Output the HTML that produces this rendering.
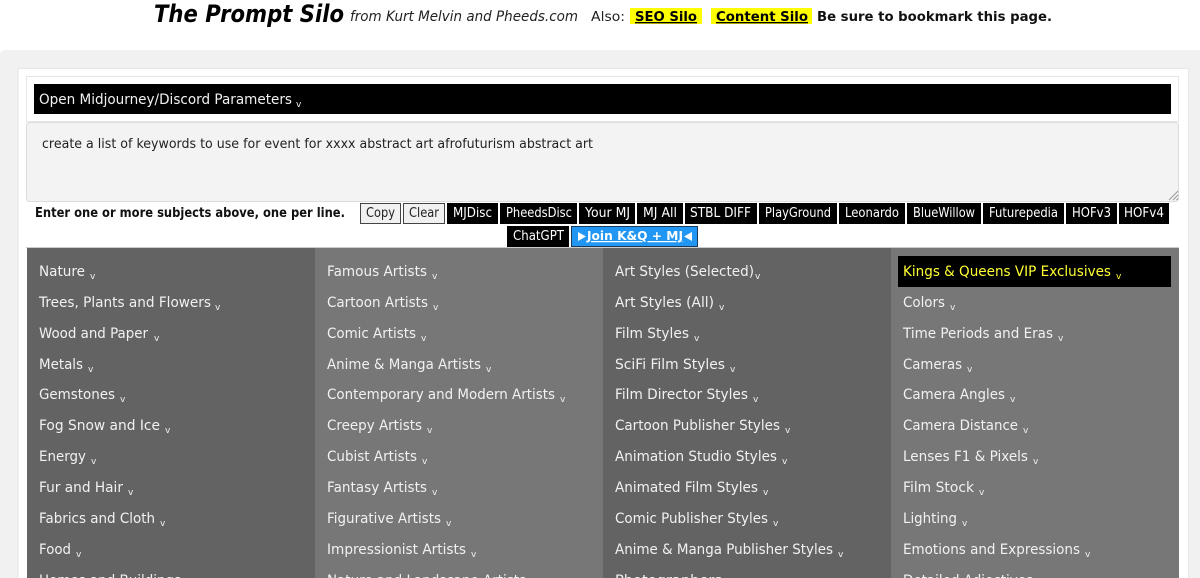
<!DOCTYPE html>
<html><head><meta charset="utf-8"><title>The Prompt Silo</title>
<style>
html,body{margin:0;padding:0;background:#fff;width:1200px;height:578px;overflow:hidden}
svg{display:block;position:absolute;left:0;top:0}
text{font-family:"DejaVu Sans",sans-serif;white-space:pre}
.r text,text.r{font-size:14.5px;fill:#f1f1f1}
.c{font-size:9px;fill:#f1f1f1}
.b{font-size:13px;fill:#fff}
</style></head><body>
<svg width="1200" height="578" viewBox="0 0 1200 578" xmlns="http://www.w3.org/2000/svg" overflow="hidden">
<rect width="1200" height="578" fill="#fff"/>
<path d="M0 578V55Q0 50 5 50H1200V578Z" fill="#f1f1f1"/>
<path d="M18 578V68.500H1188.500V578" fill="#fff" stroke="#e6e6e6"/>
<rect x="26.500" y="76.500" width="1152" height="45" fill="#fff" stroke="#e6e6e6"/>
<rect x="34" y="84" width="1137" height="30" fill="#000"/>
<text x="39" y="104" font-size="14.500" fill="#f1f1f1" textLength="253" lengthAdjust="spacingAndGlyphs">Open Midjourney/Discord Parameters</text>
<text x="296" y="107" class="c">v</text>
<rect x="26.500" y="122.500" width="1152" height="79" rx="3" fill="#f3f3f3" stroke="#dcdcdc"/>
<path d="M1169 200L1178 191M1173 200L1178 195M1176.500 200L1178 198.500" stroke="#999" stroke-width="1" fill="none"/>
<text x="42" y="148" font-size="13" fill="#222" textLength="551" lengthAdjust="spacingAndGlyphs">create a list of keywords to use for event for xxxx abstract art afrofuturism abstract art</text>

<!-- header -->
<text x="154" y="22" font-size="24" font-weight="bold" font-style="italic" fill="#000" textLength="190" lengthAdjust="spacingAndGlyphs">The Prompt Silo</text>
<text x="350" y="21" font-size="14" font-style="italic" fill="#222" textLength="228" lengthAdjust="spacingAndGlyphs">from Kurt Melvin and Pheeds.com</text>
<text x="591" y="21" font-size="13.500" fill="#222" textLength="34" lengthAdjust="spacingAndGlyphs">Also:</text>
<rect x="630" y="8" width="72" height="16" fill="#ff0"/>
<rect x="711" y="8" width="101" height="16" fill="#ff0"/>
<text x="635" y="21" font-size="13.500" font-weight="bold" fill="#000" text-decoration="underline" textLength="62" lengthAdjust="spacingAndGlyphs">SEO Silo</text>
<text x="716" y="21" font-size="13.500" font-weight="bold" fill="#000" text-decoration="underline" textLength="92" lengthAdjust="spacingAndGlyphs">Content Silo</text>
<text x="817" y="21" font-size="13.500" font-weight="bold" fill="#111" textLength="235" lengthAdjust="spacingAndGlyphs">Be sure to bookmark this page.</text>

<!-- buttons -->
<text x="35" y="217" font-size="13" font-weight="bold" fill="#111" textLength="310" lengthAdjust="spacingAndGlyphs">Enter one or more subjects above, one per line.</text>
<rect x="360.500" y="203.500" width="40" height="20" fill="#f1f1f1" stroke="#444"/>
<text x="366" y="217" font-size="13" fill="#222" textLength="29" lengthAdjust="spacingAndGlyphs">Copy</text>
<rect x="403.500" y="203.500" width="41" height="20" fill="#f1f1f1" stroke="#444"/>
<text x="409" y="217" font-size="13" fill="#222" textLength="30" lengthAdjust="spacingAndGlyphs">Clear</text>
<g fill="#000">
<rect x="447" y="203" width="51" height="21"/><rect x="500" y="203" width="77" height="21"/><rect x="579" y="203" width="56" height="21"/><rect x="637" y="203" width="46" height="21"/><rect x="685" y="203" width="72" height="21"/><rect x="759" y="203" width="78" height="21"/><rect x="839" y="203" width="66" height="21"/><rect x="907" y="203" width="74" height="21"/><rect x="983" y="203" width="81" height="21"/><rect x="1066" y="203" width="51" height="21"/><rect x="1119" y="203" width="50" height="21"/><rect x="507" y="226" width="62" height="21"/>
</g>
<rect x="571.500" y="226.500" width="126" height="20" fill="#2196f3" stroke="#1c3a55"/>
<g class="b">
<text class="b" x="453" y="217" textLength="39" lengthAdjust="spacingAndGlyphs">MJDisc</text>
<text class="b" x="506" y="217" textLength="66" lengthAdjust="spacingAndGlyphs">PheedsDisc</text>
<text class="b" x="585" y="217" textLength="45" lengthAdjust="spacingAndGlyphs">Your MJ</text>
<text class="b" x="643" y="217" textLength="34" lengthAdjust="spacingAndGlyphs">MJ All</text>
<text class="b" x="690" y="217" textLength="61" lengthAdjust="spacingAndGlyphs">STBL DIFF</text>
<text class="b" x="765" y="217" textLength="66" lengthAdjust="spacingAndGlyphs">PlayGround</text>
<text class="b" x="845" y="217" textLength="54" lengthAdjust="spacingAndGlyphs">Leonardo</text>
<text class="b" x="913" y="217" textLength="62" lengthAdjust="spacingAndGlyphs">BlueWillow</text>
<text class="b" x="989" y="217" textLength="69" lengthAdjust="spacingAndGlyphs">Futurepedia</text>
<text class="b" x="1072" y="217" textLength="39" lengthAdjust="spacingAndGlyphs">HOFv3</text>
<text class="b" x="1124" y="217" textLength="40" lengthAdjust="spacingAndGlyphs">HOFv4</text>
<text class="b" x="513" y="240" textLength="51" lengthAdjust="spacingAndGlyphs">ChatGPT</text>
</g>
<path d="M578 232L578 241L586 236.500Z M692 232L692 241L684 236.500Z" fill="#fff"/>
<text x="587" y="240" font-size="12.500" font-weight="bold" fill="#fff" text-decoration="underline" textLength="96" lengthAdjust="spacingAndGlyphs">Join K&amp;Q + MJ</text>

<!-- grid -->
<rect x="26" y="247" width="1153" height="1" fill="#ccc"/>
<rect x="27" y="248" width="288" height="330" fill="#636363"/>
<rect x="315" y="248" width="288" height="330" fill="#777"/>
<rect x="603" y="248" width="288" height="330" fill="#636363"/>
<rect x="891" y="248" width="288" height="330" fill="#777"/>
<rect x="898" y="256" width="273" height="31" fill="#000"/>

<g class="r">
<text x="39" y="276" textLength="46" lengthAdjust="spacingAndGlyphs">Nature</text>
<text x="39" y="307" textLength="172" lengthAdjust="spacingAndGlyphs">Trees, Plants and Flowers</text>
<text x="39" y="338" textLength="109" lengthAdjust="spacingAndGlyphs">Wood and Paper</text>
<text x="39" y="369" textLength="44" lengthAdjust="spacingAndGlyphs">Metals</text>
<text x="39" y="399" textLength="76" lengthAdjust="spacingAndGlyphs">Gemstones</text>
<text x="39" y="430" textLength="121" lengthAdjust="spacingAndGlyphs">Fog Snow and Ice</text>
<text x="39" y="461" textLength="47" lengthAdjust="spacingAndGlyphs">Energy</text>
<text x="39" y="492" textLength="84" lengthAdjust="spacingAndGlyphs">Fur and Hair</text>
<text x="39" y="523" textLength="116" lengthAdjust="spacingAndGlyphs">Fabrics and Cloth</text>
<text x="39" y="554" textLength="32" lengthAdjust="spacingAndGlyphs">Food</text>
<text x="39" y="585" textLength="142" lengthAdjust="spacingAndGlyphs">Homes and Buildings</text>

<text x="327" y="276" textLength="100" lengthAdjust="spacingAndGlyphs">Famous Artists</text>
<text x="327" y="307" textLength="101" lengthAdjust="spacingAndGlyphs">Cartoon Artists</text>
<text x="327" y="338" textLength="89" lengthAdjust="spacingAndGlyphs">Comic Artists</text>
<text x="327" y="369" textLength="154" lengthAdjust="spacingAndGlyphs">Anime &amp; Manga Artists</text>
<text x="327" y="399" textLength="228" lengthAdjust="spacingAndGlyphs">Contemporary and Modern Artists</text>
<text x="327" y="430" textLength="95" lengthAdjust="spacingAndGlyphs">Creepy Artists</text>
<text x="327" y="461" textLength="90" lengthAdjust="spacingAndGlyphs">Cubist Artists</text>
<text x="327" y="492" textLength="100" lengthAdjust="spacingAndGlyphs">Fantasy Artists</text>
<text x="327" y="523" textLength="114" lengthAdjust="spacingAndGlyphs">Figurative Artists</text>
<text x="327" y="554" textLength="139" lengthAdjust="spacingAndGlyphs">Impressionist Artists</text>
<text x="327" y="585" textLength="199" lengthAdjust="spacingAndGlyphs">Nature and Landscape Artists</text>

<text x="615" y="276" textLength="139" lengthAdjust="spacingAndGlyphs">Art Styles (Selected)</text>
<text x="615" y="307" textLength="99" lengthAdjust="spacingAndGlyphs">Art Styles (All)</text>
<text x="615" y="338" textLength="74" lengthAdjust="spacingAndGlyphs">Film Styles</text>
<text x="615" y="369" textLength="110" lengthAdjust="spacingAndGlyphs">SciFi Film Styles</text>
<text x="615" y="399" textLength="133" lengthAdjust="spacingAndGlyphs">Film Director Styles</text>
<text x="615" y="430" textLength="165" lengthAdjust="spacingAndGlyphs">Cartoon Publisher Styles</text>
<text x="615" y="461" textLength="162" lengthAdjust="spacingAndGlyphs">Animation Studio Styles</text>
<text x="615" y="492" textLength="143" lengthAdjust="spacingAndGlyphs">Animated Film Styles</text>
<text x="615" y="523" textLength="153" lengthAdjust="spacingAndGlyphs">Comic Publisher Styles</text>
<text x="615" y="554" textLength="218" lengthAdjust="spacingAndGlyphs">Anime &amp; Manga Publisher Styles</text>
<text x="615" y="585" textLength="107" lengthAdjust="spacingAndGlyphs">Photographers</text>

<text x="903" y="276" style="fill:#ffff33" textLength="208" lengthAdjust="spacingAndGlyphs">Kings &amp; Queens VIP Exclusives</text>
<text x="903" y="307" textLength="42" lengthAdjust="spacingAndGlyphs">Colors</text>
<text x="903" y="338" textLength="150" lengthAdjust="spacingAndGlyphs">Time Periods and Eras</text>
<text x="903" y="369" textLength="59" lengthAdjust="spacingAndGlyphs">Cameras</text>
<text x="903" y="399" textLength="102" lengthAdjust="spacingAndGlyphs">Camera Angles</text>
<text x="903" y="430" textLength="115" lengthAdjust="spacingAndGlyphs">Camera Distance</text>
<text x="903" y="461" textLength="125" lengthAdjust="spacingAndGlyphs">Lenses F1 &amp; Pixels</text>
<text x="903" y="492" textLength="71" lengthAdjust="spacingAndGlyphs">Film Stock</text>
<text x="903" y="523" textLength="54" lengthAdjust="spacingAndGlyphs">Lighting</text>
<text x="903" y="554" textLength="177" lengthAdjust="spacingAndGlyphs">Emotions and Expressions</text>
<text x="903" y="585" textLength="130" lengthAdjust="spacingAndGlyphs">Detailed Adjectives</text>
</g>

<g>
<text class="c" x="90" y="279">v</text><text class="c" x="215" y="310">v</text><text class="c" x="154" y="341">v</text><text class="c" x="88" y="372">v</text><text class="c" x="120" y="402">v</text><text class="c" x="165" y="433">v</text><text class="c" x="91" y="464">v</text><text class="c" x="128" y="495">v</text><text class="c" x="160" y="526">v</text><text class="c" x="76" y="557">v</text>
<text class="c" x="432" y="279">v</text><text class="c" x="433" y="310">v</text><text class="c" x="421" y="341">v</text><text class="c" x="486" y="372">v</text><text class="c" x="560" y="402">v</text><text class="c" x="427" y="433">v</text><text class="c" x="422" y="464">v</text><text class="c" x="432" y="495">v</text><text class="c" x="446" y="526">v</text><text class="c" x="471" y="557">v</text>
<text class="c" x="755" y="279">v</text><text class="c" x="719" y="310">v</text><text class="c" x="694" y="341">v</text><text class="c" x="730" y="372">v</text><text class="c" x="753" y="402">v</text><text class="c" x="785" y="433">v</text><text class="c" x="782" y="464">v</text><text class="c" x="763" y="495">v</text><text class="c" x="773" y="526">v</text><text class="c" x="838" y="557">v</text>
<text class="c" x="1116" y="279" style="fill:#ffff33">v</text><text class="c" x="950" y="310">v</text><text class="c" x="1058" y="341">v</text><text class="c" x="967" y="372">v</text><text class="c" x="1010" y="402">v</text><text class="c" x="1023" y="433">v</text><text class="c" x="1033" y="464">v</text><text class="c" x="979" y="495">v</text><text class="c" x="962" y="526">v</text><text class="c" x="1085" y="557">v</text>
</g>
</svg>
</body></html>
